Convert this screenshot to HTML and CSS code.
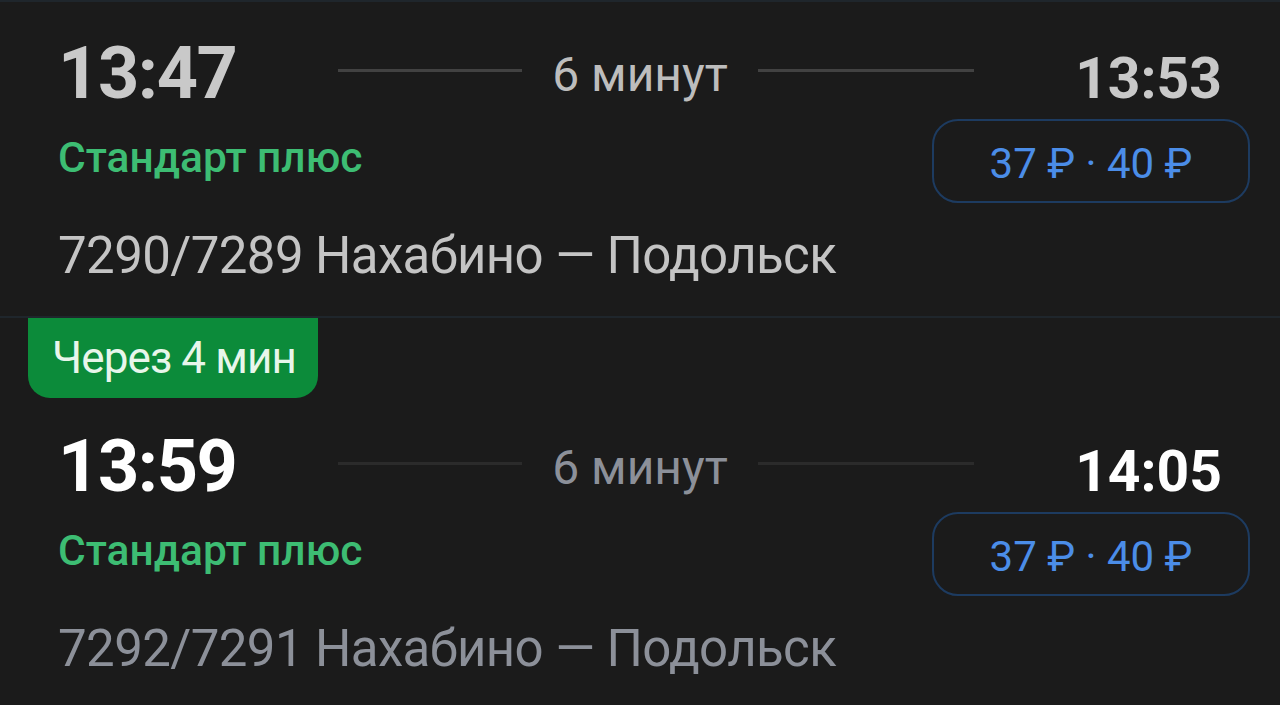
FILE: index.html
```html
<html>
	<head>
		<title>Расписание</title>
		<meta name="viewport" content="width=device-width, initial-scale=1.0">
		<link rel="stylesheet" href="styles.css">
	</head>
	<body>
		<section class="trip past">
			<div class="trip-body">
				<div class="times">
					<div class="side">
						<span class="depart">13:47</span>
						<span class="rule"></span>
					</div>
					<span class="duration">6 минут</span>
					<div class="side">
						<span class="rule"></span>
						<span class="arrive">13:53</span>
					</div>
				</div>
				<div class="fare">
					<span class="class-name">Стандарт плюс</span>
					<span class="price">37 ₽ · 40 ₽</span>
				</div>
				<div class="route">7290/7289 Нахабино — Подольск</div>
			</div>
		</section>

		<section class="trip soon">
			<div class="badge">Через 4 мин</div>
			<div class="trip-body">
				<div class="times">
					<div class="side">
						<span class="depart">13:59</span>
						<span class="rule"></span>
					</div>
					<span class="duration">6 минут</span>
					<div class="side">
						<span class="rule"></span>
						<span class="arrive">14:05</span>
					</div>
				</div>
				<div class="fare">
					<span class="class-name">Стандарт плюс</span>
					<span class="price">37 ₽ · 40 ₽</span>
				</div>
				<div class="route">7292/7291 Нахабино — Подольск</div>
			</div>
		</section>
	</body>
</html>
```

FILE: styles.css
```css
body {
	margin: 0;
	background: #1b1b1b;
	font-family: Roboto, "Noto Sans", sans-serif;
	overflow: hidden;
}

.trip {
	border-top: 2px solid #1f262c;
}

.trip-body {
	padding: 30px 58px 30px 58px;
}

.soon .trip-body {
	padding-top: 27px;
}

.times {
	display: grid;
	grid-template-columns: 1fr auto 1fr;
	column-gap: 30px;
	align-items: center;
	height: 84px;
}

.side {
	display: flex;
	align-items: center;
}

.depart {
	width: 280px;
	font-size: 72px;
	line-height: 84px;
	font-weight: 700;
	letter-spacing: -1.4px;
	color: #c9c9c9;
}

.arrive {
	width: 248px;
	text-align: right;
	font-size: 57px;
	font-weight: 700;
	margin-top: 8px;
	color: #c9c9c9;
}

.rule {
	flex: 1;
	height: 3px;
	margin-bottom: 7px;
	background: #424242;
}

.duration {
	font-size: 48px;
	color: #bdbdbd;
}

.fare {
	display: flex;
	justify-content: space-between;
	align-items: flex-start;
	margin-top: 3px;
	margin-right: -28px;
}

.class-name {
	margin-top: 14px;
	font-size: 42.5px;
	font-weight: 500;
	color: #3dbd73;
}

.price {
	box-sizing: border-box;
	width: 318px;
	height: 84px;
	padding-top: 5px;
	line-height: 75px;
	text-align: center;
	font-size: 42px;
	color: #4b8de8;
	border: 2px solid #1d3b60;
	border-radius: 26px;
}

.route {
	margin-top: 23px;
	font-size: 51px;
	line-height: 60px;
	letter-spacing: -0.6px;
	color: #c4c4c4;
}

.badge {
	box-sizing: border-box;
	width: 290px;
	height: 80px;
	margin-left: 28px;
	padding-left: 24px;
	line-height: 80px;
	font-size: 44px;
	letter-spacing: -0.9px;
	color: #e8f6eb;
	background: #0c8b3a;
	border-radius: 0 0 22px 22px;
}

.soon .depart,
.soon .arrive {
	color: #ffffff;
}

.soon .duration,
.soon .route {
	color: #8c9099;
}

.soon .rule {
	background: #2b2b2b;
}
```
